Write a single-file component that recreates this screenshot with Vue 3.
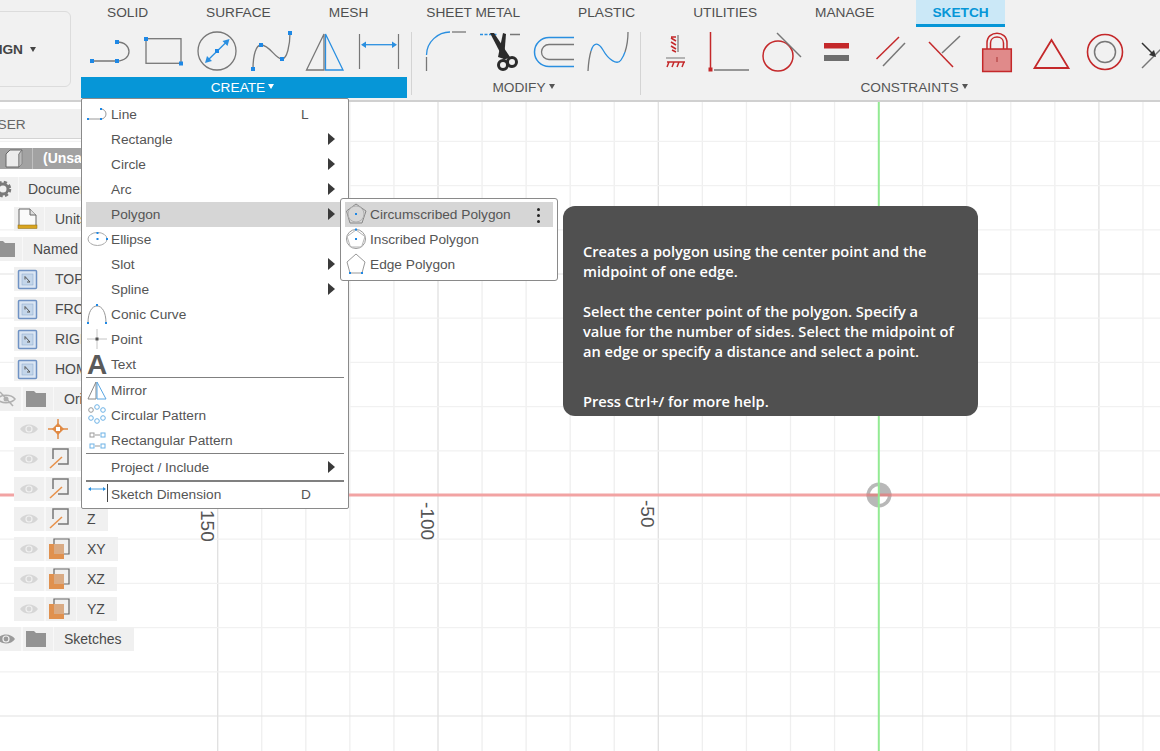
<script setup>
const tabs = ['SOLID', 'SURFACE', 'MESH', 'SHEET METAL', 'PLASTIC', 'UTILITIES', 'MANAGE', 'SKETCH']

const vLines = []
for (let k = -15; k <= 7; k++) {
  const x = 878.6 + k * 44.06
  if (k !== 0) vLines.push({ x, major: k % 5 === 0 })
}
const hLines = []
for (let k = -9; k <= 6; k++) {
  const y = 495 + k * 44.2
  if (k !== 0) hLines.push({ y, major: k % 5 === 0 })
}

const dots = (list) => list.map(([x, y]) => `<rect x="${x - 1}" y="${y - 1}" width="2" height="2" fill="#1e88e5"/>`).join('')
const icons = {
  line: `<path d="M1 17H14M14 7a5 5 0 0 1 0 10" fill="none" stroke="#999"/>` + dots([[1, 17], [14, 17], [14, 7]]),
  ellipse: `<ellipse cx="10.5" cy="12" rx="9.5" ry="6.5" fill="none" stroke="#aaa"/>` + dots([[10.5, 12], [20, 12], [10.5, 6]]),
  conic: `<path d="M1 21C1 10 5 4 10 4C15 4 19 10 19 21" fill="none" stroke="#999"/>` + dots([[1, 21], [19, 21], [10, 3]]),
  point: `<path d="M0 12H20M10 2V22" stroke="#c4c4c4"/><rect x="8.5" y="10.5" width="3" height="3" fill="#555"/>`,
  text: `<text x="10" y="22" text-anchor="middle" font-family="Liberation Sans" font-weight="700" font-size="28" fill="#5a5a5a">A</text>`,
  mirror: `<path d="M9 4L1 21H9Z" fill="none" stroke="#888"/><path d="M10 4L19 21H10Z" fill="none" stroke="#5aa6e2"/>`,
  circular: `<g fill="none"><circle cx="4" cy="7" r="2.3" stroke="#999"/><circle cx="10" cy="4" r="2.3" stroke="#6db2e6"/><circle cx="16" cy="7" r="2.3" stroke="#6db2e6"/><circle cx="16" cy="15" r="2.3" stroke="#6db2e6"/><circle cx="10" cy="18" r="2.3" stroke="#6db2e6"/><circle cx="4" cy="15" r="2.3" stroke="#6db2e6"/></g>`,
  rectangular: `<g fill="none"><rect x="3" y="5" width="4" height="4" stroke="#999"/><rect x="14" y="5" width="4" height="4" stroke="#6db2e6"/><rect x="3" y="16" width="4" height="4" stroke="#6db2e6"/><rect x="14" y="16" width="4" height="4" stroke="#6db2e6"/><path d="M8 7H13M8 18H13" stroke="#999"/></g>`,
  dimension: `<path d="M2 7H18" stroke="#4a9fe0"/><path d="M1 7l3-2v4zM19 7l-3-2v4z" fill="#2a8fe0"/><path d="M20.5 2V20" stroke="#444"/>`,
  circumscribed: `<path d="M10 2L20 9L16 21H4L0.5 9Z" fill="none" stroke="#888"/><circle cx="10" cy="12" r="8" fill="none" stroke="#b0b0b0"/>` + dots([[10, 12]]),
  inscribed: `<circle cx="10" cy="12" r="9.5" fill="none" stroke="#999"/><path d="M10 3L19 9.5L15.5 20H4.5L1 9.5Z" fill="none" stroke="#b5b5b5"/>` + dots([[10, 12], [10, 2.5]]),
  edge: `<path d="M10 2L19 10L16 21H4L1 10Z" fill="none" stroke="#999"/>` + dots([[4, 21], [16, 21]]),
  eye: `<path d="M1 8C5 2 15 2 19 8C15 14 5 14 1 8Z" fill="#d6d6d6"/><circle cx="10" cy="8" r="3.6" fill="#f0f0f0"/><circle cx="10" cy="8" r="2.4" fill="#d6d6d6"/>`,
  eyeOn: `<path d="M1 8C5 2 15 2 19 8C15 14 5 14 1 8Z" fill="#9a9a9a"/><circle cx="10" cy="8" r="3.6" fill="#f0f0f0"/><circle cx="10" cy="8" r="2.4" fill="#9a9a9a"/>`,
  eyeOff: `<path d="M1 8C5 3 15 3 19 8C15 13 5 13 1 8Z" fill="none" stroke="#b0b0b0" stroke-width="1.5"/><circle cx="10" cy="8" r="2.5" fill="#b0b0b0"/><path d="M4 1L17 15" stroke="#b0b0b0" stroke-width="1.5"/>`,
  folder: `<path d="M3 4H11L13 6H23V20H3Z" fill="#939393"/>`,
  gear: `<circle cx="15" cy="12" r="6.5" fill="none" stroke="#7a7a7a" stroke-width="3.5" stroke-dasharray="3 2.1"/><circle cx="15" cy="12" r="5" fill="none" stroke="#7a7a7a" stroke-width="3"/>`,
  units: `<path d="M5 2H16L22 8V19H5Z" fill="#fafafa" stroke="#666"/><path d="M16 2V8H22" fill="#ddd" stroke="#666"/><rect x="4" y="18" width="19" height="3.5" fill="#d9a520" stroke="#8a6a10" stroke-width=".5"/>`,
  view: `<rect x="4.5" y="3.5" width="18" height="18" rx="1" fill="#dbe6f3" stroke="#6f92c4" stroke-width="1.5"/><rect x="8" y="7" width="11" height="11" fill="#c4d6ea" stroke="#8aa8cc" stroke-width=".5"/><path d="M11 9.5L16 15M11 9.5v3M16 15h-3" fill="none" stroke="#555"/>`,
  origin: `<path d="M12 2V22M2 12H22" stroke="#e08a45" stroke-width="1.5"/><path d="M12 6L18 12L12 18L6 12Z" fill="#e08a45"/><rect x="10" y="10" width="4" height="4" fill="#fff"/>`,
  axis: `<path d="M7 12V2H22V17H12" fill="none" stroke="#777" stroke-width="1.5"/><path d="M4 21L16 10" stroke="#e89048" stroke-width="1.5"/>`,
  plane: `<path d="M8 7V2H23V17H18" fill="none" stroke="#666" stroke-width="1.2"/><rect x="3" y="7" width="15" height="15" fill="#e0914f"/><rect x="8" y="7" width="10" height="10" fill="#d9ab85"/>`,
}

const menuTop = [
  { label: 'Line', icon: 'line', key: 'L' },
  { label: 'Rectangle', sub: true },
  { label: 'Circle', sub: true },
  { label: 'Arc', sub: true },
  { label: 'Polygon', sub: true, active: true },
  { label: 'Ellipse', icon: 'ellipse' },
  { label: 'Slot', sub: true },
  { label: 'Spline', sub: true },
  { label: 'Conic Curve', icon: 'conic' },
  { label: 'Point', icon: 'point' },
  { label: 'Text', icon: 'text' },
]
const menuMid = [
  { label: 'Mirror', icon: 'mirror' },
  { label: 'Circular Pattern', icon: 'circular' },
  { label: 'Rectangular Pattern', icon: 'rectangular' },
]
const subMenu = [
  { label: 'Circumscribed Polygon', icon: 'circumscribed', active: true },
  { label: 'Inscribed Polygon', icon: 'inscribed' },
  { label: 'Edge Polygon', icon: 'edge' },
]

const treeUpper = [
  { kind: 'gearRow', icon: 'gear', label: 'Document Settings' },
  { kind: 'child', icon: 'units', label: 'Units: mm' },
  { kind: 'named', icon: 'folder', label: 'Named Views' },
  { kind: 'child', icon: 'view', label: 'TOP' },
  { kind: 'child', icon: 'view', label: 'FRONT' },
  { kind: 'child', icon: 'view', label: 'RIGHT' },
  { kind: 'child', icon: 'view', label: 'HOME' },
  { kind: 'root', eye: 'eyeOff', icon: 'folder', label: 'Origin' },
  { kind: 'leaf', eye: 'eye', icon: 'origin', label: 'O' },
  { kind: 'leaf', eye: 'eye', icon: 'axis', label: 'X' },
  { kind: 'leaf', eye: 'eye', icon: 'axis', label: 'Y' },
]
const treeLower = [
  { kind: 'leaf', eye: 'eye', icon: 'axis', label: 'Z' },
  { kind: 'leaf', eye: 'eye', icon: 'plane', label: 'XY' },
  { kind: 'leaf', eye: 'eye', icon: 'plane', label: 'XZ' },
  { kind: 'leaf', eye: 'eye', icon: 'plane', label: 'YZ' },
  { kind: 'root', eye: 'eyeOn', icon: 'folder', label: 'Sketches' },
]
</script>

<template>
  <div class="app">
    <header class="toolbar">
      <div class="workspace">
        <button class="design"><span class="dname">DESIGN</span><span class="caret"></span></button>
      </div>
      <div class="ribbon">
        <nav class="tabs">
          <span v-for="t in tabs" :key="t" class="tab" :class="{ on: t === 'SKETCH' }">{{ t }}</span>
        </nav>
        <div class="panels">
          <section class="panel create">
            <div class="tools">
              <svg width="52" height="50" viewBox="88 27 52 50"><path d="M92 61H117M117 42C133 42 133 61 117 61" fill="none" stroke="#777" stroke-width="1.3"/><g fill="#1e88e5"><rect x="90" y="59" width="4" height="4"/><rect x="115" y="59" width="4" height="4"/><rect x="115" y="40" width="4" height="4"/></g></svg>
              <svg width="50" height="50" viewBox="140 27 50 50"><rect x="146" y="38.7" width="35" height="24.6" fill="none" stroke="#777" stroke-width="1.3"/><g fill="#1e88e5"><rect x="144" y="37" width="4" height="4"/><rect x="179" y="61.5" width="4" height="4"/></g></svg>
              <svg width="54" height="50" viewBox="190 27 54 50"><circle cx="217" cy="51" r="19" fill="none" stroke="#777" stroke-width="1.3"/><path d="M207 61L227.5 41" stroke="#2a8fe0" stroke-width="1.3"/><path d="M205 63L207 56L212 61ZM229.5 39L222.5 41L227.5 46Z" fill="#2a8fe0"/><rect x="215" y="49" width="4" height="4" fill="#1e88e5"/></svg>
              <svg width="56" height="50" viewBox="244 27 56 50"><path d="M253 69C253 55 256 45 261 45C270 45 275 59 282 59C287 59 290 45 290 33" fill="none" stroke="#777" stroke-width="1.3"/><g fill="#1e88e5"><rect x="251" y="67" width="4" height="4"/><rect x="259" y="43" width="4" height="4"/><rect x="280" y="57" width="4" height="4"/><rect x="288" y="31" width="4" height="4"/></g></svg>
              <svg width="52" height="50" viewBox="300 27 52 50"><path d="M324 34L306.5 70H324Z" fill="none" stroke="#777" stroke-width="1.3"/><path d="M325.5 34V70H343Z" fill="none" stroke="#2a8fe0" stroke-width="1.3"/></svg>
              <svg width="52" height="50" viewBox="352 27 52 50"><path d="M359.5 34V69M398.5 34V69" stroke="#777" stroke-width="1.2"/><path d="M364 44.7H394" stroke="#2a8fe0" stroke-width="1.3"/><path d="M361 44.7L366 41.5V48ZM397 44.7L392 41.5V48Z" fill="#2a8fe0"/></svg>
            </div>
            <div class="label active">CREATE<span class="mini"></span></div>
          </section>
          <div class="sep first"></div>
          <section class="panel modify">
            <div class="tools">
              <svg width="54" height="50" viewBox="420 27 54 50"><path d="M452 32H466" stroke="#777" stroke-width="1.3"/><path d="M426.5 55C426.5 42 438 32 450 32" fill="none" stroke="#2a8fe0" stroke-width="1.3"/><path d="M426.5 57V71" stroke="#777" stroke-width="1.3"/></svg>
              <svg width="54" height="50" viewBox="474 27 54 50"><path d="M480 34.5H497" stroke="#2a8fe0" stroke-width="1.5" stroke-dasharray="3 1.5"/><path d="M510 34.5H520" stroke="#777" stroke-width="1.5"/><path d="M490 33L494 33L510 57L504 60Z" fill="#2b2b2b"/><path d="M503 33L506 34L504 59L498 57Z" fill="#2b2b2b"/><circle cx="503" cy="65" r="4.5" fill="none" stroke="#2b2b2b" stroke-width="3"/><circle cx="512" cy="62" r="4.5" fill="none" stroke="#2b2b2b" stroke-width="3"/></svg>
              <svg width="54" height="50" viewBox="528 27 54 50"><path d="M574 37.5H549A14.5 14.5 0 0 0 549 66.5H574" fill="none" stroke="#2a8fe0" stroke-width="1.5"/><path d="M574 44.5H549A7.5 7.5 0 0 0 549 59.5H574" fill="none" stroke="#777" stroke-width="1.3"/></svg>
              <svg width="54" height="50" viewBox="582 27 54 50"><path d="M588 71C588.5 62 589.5 56 591 51M625 52C627 46 628 40 628 32" fill="none" stroke="#777" stroke-width="1.3"/><path d="M591 51C594 41 599 43 603 50C608 59 617 66 621 60C623 57 624 55 625 52" fill="none" stroke="#2a8fe0" stroke-width="1.3"/></svg>
            </div>
            <div class="label">MODIFY<span class="mini"></span></div>
          </section>
          <div class="sep"></div>
          <section class="panel constraints">
            <div class="tools">
              <svg width="35" height="50" viewBox="660 27 35 50"><path d="M678 35V52M666 58H685" stroke="#777" stroke-width="1.2"/><path d="M676 37H671M676 41L671 38M676 45L671 42M676 49L671 46M676 52L672 50M669 62L667 67M674 62L672 67M679 62L677 67M684 62L682 67M667 62H685" stroke="#c4282a" stroke-width="1.5" fill="none"/></svg>
              <svg width="65" height="50" viewBox="695 27 65 50"><path d="M710.5 32V69" stroke="#c4282a" stroke-width="1.5"/><rect x="708.5" y="67.5" width="4" height="4" fill="#c4282a"/><path d="M714 70H749" stroke="#777" stroke-width="1.5"/></svg>
              <svg width="55" height="50" viewBox="760 27 55 50"><circle cx="778" cy="56" r="15" fill="none" stroke="#c4282a" stroke-width="1.5"/><path d="M777 33L801 57" stroke="#777" stroke-width="1.5"/></svg>
              <svg width="50" height="50" viewBox="815 27 50 50"><rect x="824" y="43" width="25" height="5.5" fill="#c4282a"/><rect x="824" y="55" width="25" height="6" fill="#6e6e6e"/></svg>
              <svg width="55" height="50" viewBox="865 27 55 50"><path d="M876.5 59L899 37" stroke="#c4282a" stroke-width="1.5"/><path d="M883 66L905 43" stroke="#777" stroke-width="1.5"/></svg>
              <svg width="50" height="50" viewBox="920 27 50 50"><path d="M929 42L953 67" stroke="#c4282a" stroke-width="1.5"/><path d="M942 53L960 36" stroke="#777" stroke-width="1.5"/></svg>
              <svg width="55" height="50" viewBox="970 27 55 50"><path d="M987 49V43C987 30 1007 30 1007 43V49M990.5 49V43C990.5 35 1003.5 35 1003.5 43V49" fill="none" stroke="#c4282a" stroke-width="1.5"/><rect x="982.7" y="49" width="28.6" height="22.5" fill="#e08a8a" stroke="#c4282a" stroke-width="1.5"/><path d="M997 57V62" stroke="#a33" stroke-width="1"/></svg>
              <svg width="55" height="50" viewBox="1025 27 55 50"><path d="M1051.5 40L1034.5 68H1068.5Z" fill="none" stroke="#c4282a" stroke-width="1.8"/></svg>
              <svg width="50" height="50" viewBox="1080 27 50 50"><circle cx="1105" cy="52" r="17.5" fill="none" stroke="#c4282a" stroke-width="1.6"/><circle cx="1105" cy="52" r="10.5" fill="none" stroke="#777" stroke-width="1.5"/></svg>
              <svg width="40" height="50" viewBox="1130 27 40 50"><path d="M1142 68L1162 48" stroke="#777" stroke-width="1.5"/><path d="M1142 43L1153 54" stroke="#333" stroke-width="1.5"/><path d="M1156 57L1149 55L1154 50Z" fill="#333"/></svg>
            </div>
            <div class="label">CONSTRAINTS<span class="mini"></span></div>
          </section>
        </div>
      </div>
    </header>

    <main class="canvas">
      <svg class="grid" width="1160" height="649" viewBox="0 102 1160 649">
        <line v-for="l in vLines" :key="'v' + l.x" :x1="l.x" :x2="l.x" y1="102" y2="751" :stroke="l.major ? '#e0e0e0' : '#efefef'" stroke-width="1.3" />
        <line v-for="l in hLines" :key="'h' + l.y" x1="0" x2="1160" :y1="l.y" :y2="l.y" :stroke="l.major ? '#e2e2e2' : '#f1f1f1'" stroke-width="1.2" />
        <line x1="0" x2="1160" y1="495" y2="495" stroke="#f2a3a3" stroke-width="3" />
        <circle cx="879" cy="495" r="12.5" fill="#b8b8b8" />
        <path d="M879 495V486A9 9 0 0 0 870 495ZM879 495V504A9 9 0 0 0 888 495Z" fill="#fff" />
        <line x1="866.5" x2="891.5" y1="495" y2="495" stroke="#d98a8a" stroke-width="3" />
        <line x1="878.8" x2="878.8" y1="102" y2="751" stroke="#93ea93" stroke-width="2" />
      </svg>
      <span class="tick t150">150</span>
      <span class="tick t100">-100</span>
      <span class="tick t50">-50</span>

      <aside class="browser">
        <div class="bhead">BROWSER</div>
        <div class="doc">
          <svg class="cube" width="18" height="20" viewBox="0 0 18 20"><path d="M1 5L5 1H17L14 5V18H1Z" fill="#ececec" stroke="#666"/><path d="M14 5L17 1V15L14 18Z" fill="#bbb" stroke="#666" stroke-width=".5"/></svg>
          <span class="docname">(Unsaved)</span>
        </div>
        <div class="tree clipped">
          <div v-for="r in treeUpper" :key="r.label" class="row" :class="r.kind">
            <span v-if="r.eye" class="cell eye"><svg width="20" height="16" viewBox="0 0 20 16" v-html="icons[r.eye]"></svg></span>
            <span class="cell ico"><svg width="30" height="24" viewBox="0 0 30 24" v-html="icons[r.icon]"></svg></span>
            <span class="cell name">{{ r.label }}</span>
          </div>
        </div>
        <div class="tree lower">
          <div v-for="r in treeLower" :key="r.label" class="row" :class="r.kind">
            <span class="cell eye"><svg width="20" height="16" viewBox="0 0 20 16" v-html="icons[r.eye]"></svg></span>
            <span class="cell ico"><svg width="30" height="24" viewBox="0 0 30 24" v-html="icons[r.icon]"></svg></span>
            <span class="cell name">{{ r.label }}</span>
          </div>
        </div>
      </aside>

      <div class="menu">
        <div v-for="m in menuTop" :key="m.label" class="item" :class="{ active: m.active }">
          <svg class="mi" width="22" height="25" viewBox="0 0 22 25" v-html="m.icon ? icons[m.icon] : ''"></svg>
          <span class="txt">{{ m.label }}</span>
          <span v-if="m.key" class="key">{{ m.key }}</span>
          <span v-if="m.sub" class="arrow"></span>
        </div>
        <hr class="rule" />
        <div v-for="m in menuMid" :key="m.label" class="item">
          <svg class="mi" width="22" height="25" viewBox="0 0 22 25" v-html="icons[m.icon]"></svg>
          <span class="txt">{{ m.label }}</span>
        </div>
        <hr class="rule" />
        <div class="item project">
          <span class="mi"></span>
          <span class="txt">Project / Include</span>
          <span class="arrow"></span>
        </div>
        <hr class="rule thick" />
        <div class="item">
          <svg class="mi" width="22" height="25" viewBox="0 0 22 25" v-html="icons.dimension"></svg>
          <span class="txt">Sketch Dimension</span>
          <span class="key">D</span>
        </div>
      </div>

      <div class="submenu">
        <div v-for="m in subMenu" :key="m.label" class="item" :class="{ active: m.active }">
          <svg class="si" width="22" height="25" viewBox="0 0 22 25" v-html="icons[m.icon]"></svg>
          <span class="txt">{{ m.label }}</span>
          <span v-if="m.active" class="kebab"><i></i><i></i><i></i></span>
        </div>
      </div>

      <div class="tip">
        <p>Creates a polygon using the center point and the<br />midpoint of one edge.</p>
        <p>Select the center point of the polygon. Specify a<br />value for the number of sides. Select the midpoint of<br />an edge or specify a distance and select a point.</p>
        <p class="more">Press Ctrl+/ for more help.</p>
      </div>
    </main>
  </div>
</template>

<style>
html, body { margin: 0; background: #fff; }
</style>

<style scoped>
.app {
  position: relative;
  width: 1160px;
  height: 751px;
  overflow: hidden;
  display: flex;
  flex-direction: column;
  background: #fff;
  font-family: "Liberation Sans", Arial, sans-serif;
  font-size: 13.7px;
  color: #555;
}
.toolbar {
  display: flex;
  height: 100px;
  flex: none;
  background: #f1f1f1;
  border-bottom: 2px solid #d0d0d0;
}
.workspace { width: 81px; flex: none; position: relative; }
.design {
  position: absolute;
  left: -20px;
  top: 11px;
  width: 91px;
  height: 76px;
  box-sizing: border-box;
  background: #f1f1f1;
  border: 1px solid #dcdcdc;
  border-radius: 6px;
  font: 700 13.7px "Liberation Sans", Arial, sans-serif;
  color: #444;
  display: flex;
  align-items: center;
  justify-content: flex-end;
  padding: 0 34px 0 0;
}
.dname { margin-right: 7px; }
.caret { width: 0; height: 0; border-left: 3.5px solid transparent; border-right: 3.5px solid transparent; border-top: 5px solid #444; }
.ribbon { flex: 1; min-width: 0; }
.tabs { display: flex; height: 27px; padding-left: 10px; gap: 26px; box-sizing: border-box; }
.tab {
  height: 24px;
  line-height: 25px;
  padding: 0 16px;
  white-space: nowrap;
  color: #4f4f4f;
}
.tab.on {
  background: #cbe8f7;
  border-bottom: 3px solid #0696d7;
  color: #0696d7;
  font-weight: 700;
}
.panels { display: flex; height: 71px; align-items: flex-start; }
.panel { flex: none; }
.create { width: 326px; }
.modify { width: 228px; }
.constraints { width: 546px; }
.tools { display: flex; height: 50px; }
.tools svg { flex: none; display: block; overflow: visible; }
.create .tools { padding-left: 7px; }
.modify .tools { padding-left: 8px; }
.constraints .tools { padding-left: 19px; }
.label {
  height: 21px;
  line-height: 21px;
  text-align: center;
  color: #555;
  white-space: nowrap;
  box-sizing: border-box;
}
.label.active { background: #0696d7; color: #fff; padding-right: 3px; }
.modify .label { padding-right: 5px; }
.mini {
  display: inline-block;
  width: 0;
  height: 0;
  margin-left: 3px;
  vertical-align: 3px;
  border-left: 3.5px solid transparent;
  border-right: 3.5px solid transparent;
  border-top: 5px solid currentColor;
}
.sep { width: 1px; height: 63px; margin-top: 5px; background: #d4d4d4; flex: none; }
.sep.first { margin-left: 4px; }

.canvas { position: relative; flex: 1; }
.grid { position: absolute; left: 0; top: 0; display: block; }
.tick {
  position: absolute;
  writing-mode: vertical-rl;
  font-size: 19px;
  line-height: 20px;
  color: #555;
}
.t150 { left: 197px; top: 408px; }
.t100 { left: 417px; top: 400px; }
.t50 { left: 637px; top: 398px; }

.browser { position: relative; width: 81px; padding-top: 7px; }
.bhead {
  height: 30px;
  line-height: 31px;
  width: 126px;
  margin-left: -45px;
  box-sizing: border-box;
  background: #f0f0f0;
  border-bottom: 1px solid #d4d4d4;
  color: #666;
  white-space: nowrap;
}
.doc {
  display: flex;
  align-items: center;
  height: 21px;
  margin-top: 9px;
  width: 81px;
  overflow: hidden;
  background: #a2a2a2;
  color: #fff;
  font-weight: 700;
  white-space: nowrap;
  font-size: 14px;
}
.cube { margin-left: 5px; flex: none; }
.docname { margin-left: 9px; padding-left: 10px; height: 21px; line-height: 21px; border-left: 1px solid #c0c0c0; }
.tree { display: flex; flex-direction: column; gap: 6px; margin-top: 8px; font-size: 14px; }
.tree.clipped { width: 81px; overflow: hidden; }
.tree.lower { margin-top: 6px; }
.row { display: flex; height: 24px; width: max-content; background: #f8f8f8; flex: none; }
.cell { display: flex; align-items: center; justify-content: center; background: #f0f0f0; height: 24px; white-space: nowrap; color: #4a4a4a; }
.eye { width: 30px; margin-right: 2px; }
.ico { width: 30px; margin-right: 1px; }
.name { padding: 0 12px 0 10px; }
.root { margin-left: -9px; }
.leaf { margin-left: 14px; }
.child { margin-left: 14px; }
.gearRow { margin-left: -12px; }
.gearRow .name { padding-left: 9px; }
.named { margin-left: -8px; }
.named .name { padding-left: 10px; }

.menu {
  position: absolute;
  left: 81px;
  top: -4px;
  width: 268px;
  height: 411px;
  padding: 3px 4px 0;
  box-sizing: border-box;
  background: #fff;
  border: 1px solid #8a8a8a;
  border-radius: 2px;
}
.item {
  display: flex;
  align-items: center;
  height: 25px;
  white-space: nowrap;
  color: #555;
  position: relative;
}
.item.active { background: #d6d6d6; }
.item.project { margin-top: 1px; }
.txt { line-height: 25px; height: 25px; }
.mi { width: 22px; height: 25px; margin-left: 1px; flex: none; display: block; }
.menu .txt { margin-left: 2px; }
.key { position: absolute; left: 215px; top: 0; line-height: 25px; color: #555; }
.arrow {
  position: absolute;
  left: 242px;
  top: 6px;
  width: 0;
  height: 0;
  border-left: 7px solid #3a3a3a;
  border-top: 6px solid transparent;
  border-bottom: 6px solid transparent;
}
.rule { margin: 0; border: 0; height: 1px; background: #808080; }
.rule.thick { height: 2px; }

.submenu {
  position: absolute;
  left: 340px;
  top: 96px;
  width: 218px;
  height: 83px;
  box-sizing: border-box;
  padding: 3px 4px;
  background: #fff;
  border: 1px solid #8a8a8a;
  border-radius: 3px;
}
.si { width: 22px; height: 25px; margin-left: 1px; flex: none; display: block; }
.submenu .txt { margin-left: 2px; }
.kebab { position: absolute; left: 192px; top: 6px; display: flex; flex-direction: column; gap: 3px; }
.kebab i { width: 3px; height: 3px; border-radius: 50%; background: #222; display: block; }

.tip {
  position: absolute;
  left: 563px;
  top: 104px;
  width: 415px;
  height: 210px;
  box-sizing: border-box;
  padding: 35px 20px 0;
  background: #505050;
  border-radius: 12px;
  color: #fff;
  font: 600 14.63px/20px "Open Sans", sans-serif;
  white-space: nowrap;
}
.tip p { margin: 0 0 20px; }
.tip .more { margin-top: 30px; margin-bottom: 0; }
</style>
